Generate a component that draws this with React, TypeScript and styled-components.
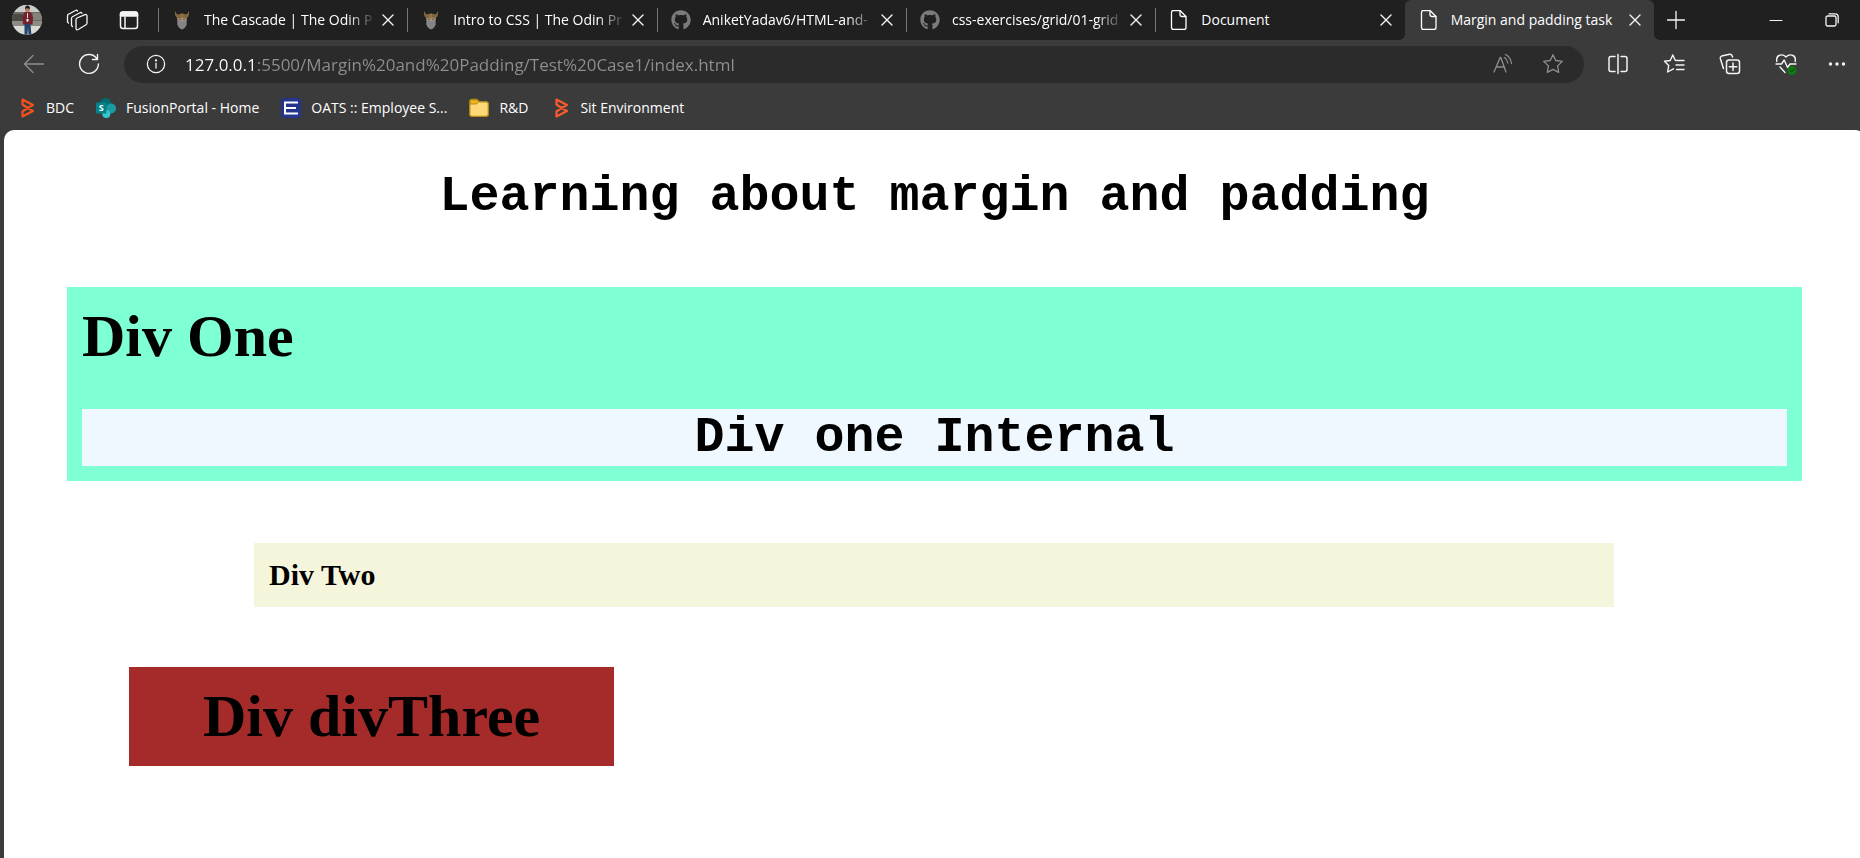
import React from "react";
import styled, { createGlobalStyle, css } from "styled-components";
import { FaGithub } from "react-icons/fa";

const GlobalStyle = createGlobalStyle`
  * { box-sizing: border-box; }
  body { margin: 0; background: #3b3b3b; }
`;

const Shell = styled.div`
  display: flex;
  flex-direction: column;
  min-height: 100vh;
  overflow: hidden;
  background: #3b3b3b;
  color: #fff;
  font-family: "Open Sans", "Noto Sans", sans-serif;
  font-size: 14px;
`;

/* ---------- tab strip ---------- */

const TabStrip = styled.header`
  display: flex;
  height: 40px;
  background: #202020;
`;

const StripTools = styled.div`
  display: flex;
  align-items: center;
  gap: 20px;
  width: 158px;
  padding-left: 11px;
`;

const TabList = styled.nav`
  display: flex;
  flex: 1;
  min-width: 0;
`;

const corner = css`
  content: "";
  position: absolute;
  bottom: 0;
  width: 6px;
  height: 6px;
`;

const TabItem = styled.div<{ $active?: boolean }>`
  position: relative;
  display: flex;
  align-items: center;
  flex: 1 1 0;
  min-width: 0;
  height: 40px;
  padding-right: 7px;
  ${(p) =>
    p.$active &&
    css`
      background: #3b3b3b;
      border-radius: 6px 6px 0 0;
      &::before {
        ${corner}
        left: -6px;
        background: radial-gradient(circle at 0 0, transparent 6px, #3b3b3b 6px);
      }
      &::after {
        ${corner}
        right: -6px;
        background: radial-gradient(circle at 100% 0, transparent 6px, #3b3b3b 6px);
      }
    `}
`;

const Divider = styled.span<{ $hidden?: boolean }>`
  width: 1px;
  height: 24px;
  margin-right: 13px;
  background: ${(p) => (p.$hidden ? "transparent" : "#757575")};
`;

const TabLink = styled.a<{ $faded?: boolean }>`
  display: flex;
  align-items: center;
  gap: 12px;
  flex: 1;
  min-width: 0;
  overflow: hidden;
  color: #fff;
  line-height: 20px;
  text-decoration: none;
  white-space: nowrap;
  ${(p) => p.$faded && "mask-image: linear-gradient(to left, transparent, #000 28px);"}
  svg { flex: none; }
`;

const IconButton = styled.button<{ $w?: number; $dim?: boolean }>`
  display: flex;
  align-items: center;
  justify-content: center;
  flex: none;
  width: ${(p) => p.$w ?? 20}px;
  height: 32px;
  padding: 0;
  border: 0;
  background: none;
  color: ${(p) => (p.$dim ? "#8f8f8f" : "#f4f4f4")};
`;

const WindowControls = styled.div`
  display: flex;
  align-items: center;
  width: 206px;
  padding-left: 6px;
`;

const Spacer = styled.span`
  flex: 1;
`;

/* ---------- toolbar ---------- */

const Toolbar = styled.div`
  display: flex;
  align-items: center;
  height: 48px;
  padding-left: 6px;
`;

const AddressBar = styled.form`
  display: flex;
  align-items: center;
  flex: 1;
  min-width: 0;
  height: 37px;
  margin: 0 6px 0 7px;
  padding: 0 11px 0 22px;
  border-radius: 19px;
  background: #2b2b2b;
`;

const AddressInput = styled.input`
  flex: 1;
  min-width: 0;
  height: 28px;
  margin-left: 19px;
  padding: 0;
  border: 0;
  outline: 0;
  font-family: "Open Sans", "Noto Sans", sans-serif;
  font-size: 17px;
  color: transparent;
  background: linear-gradient(to right, #fff 72px, #8f8f8f 72px);
  background-clip: text;
  -webkit-background-clip: text;
`;

/* ---------- bookmarks ---------- */

const Bookmarks = styled.nav`
  display: flex;
  align-items: center;
  gap: 22px;
  height: 42px;
  padding: 0 0 2px 16px;
`;

const Bookmark = styled.a`
  display: flex;
  align-items: center;
  gap: 10px;
  color: #fff;
  line-height: 20px;
  text-decoration: none;
  white-space: nowrap;
`;

/* ---------- document ---------- */

const Page = styled.main`
  flex: 1;
  margin: 0 -5px 0 4px;
  padding: 38px 63px 92px;
  border-radius: 10px 10px 0 0;
  background: #fff;
  color: #000;
  font-family: "Liberation Serif", "Times New Roman", serif;
  font-weight: 700;
`;

const MonoHeading = styled.h1`
  margin: 0;
  font-family: "Courier New", "Liberation Mono", monospace;
  font-size: 50px;
  line-height: 57px;
  text-align: center;
`;

const DivOne = styled.section`
  margin-top: 62px;
  padding: 15px;
  background: aquamarine;
`;

const BigText = styled.div`
  font-size: 60px;
  line-height: 69px;
`;

const Internal = styled(MonoHeading).attrs({ as: "h2" })`
  margin-top: 38px;
  background: #f0f8ff;
`;

const DivTwo = styled.section`
  margin: 62px 188px 0 187px;
  padding: 15px;
  background: beige;
  font-size: 30px;
  line-height: 34px;
`;

const DivThree = styled.section`
  width: fit-content;
  margin: 60px 0 0 62px;
  padding: 15px 74px;
  background: brown;
`;

/* ---------- icons ---------- */

const Svg = ({ size = 20, children, sw = 1.3 }: { size?: number; sw?: number; children: React.ReactNode }) => (
  <svg width={size} height={size} viewBox={`0 0 ${size} ${size}`} fill="none" stroke="currentColor"
    strokeWidth={sw} strokeLinecap="round" strokeLinejoin="round" aria-hidden="true">
    {children}
  </svg>
);

const Avatar = () => (
  <svg width="32" height="32" viewBox="0 0 32 32" aria-hidden="true">
    <clipPath id="face"><circle cx="16" cy="16" r="15" /></clipPath>
    <g clipPath="url(#face)">
      <rect width="32" height="32" fill="#d9dad6" />
      <rect width="32" height="8" fill="#c9cdca" />
      <path d="M0 8h32v9H0z" fill="#6d6a64" />
      <path d="M0 10h12v7H0z" fill="#4b4a47" />
      <path d="M22 9h10v7H22z" fill="#85827c" />
      <path d="M0 17h32v5H0z" fill="#8f8b82" />
      <path d="M13 8.500q4-1.500 7 0l2 5-.5 7h-9.500l-.5-7z" fill="#74202f" />
      <path d="M13.500 20h6l1 12h-3L17 24l-.7 8h-2.800z" fill="#24446e" />
      <circle cx="16.500" cy="5.500" r="2.500" fill="#b47e63" />
      <path d="M14 5q0-3.500 2.500-3.500T19 5q-2.500-1.500-5 0z" fill="#20191a" />
      <path d="M16 9h1v5h-1z" fill="#ead8dc" />
      <path d="M15.500 15h2v2.500h-2z" fill="#fff" />
    </g>
  </svg>
);

const Workspaces = () => (
  <Svg size={22}>
    <path d="M2.500 14 1.500 13V7q0-1.300 1-1.800l7-3.700q1.500-.6 2 .5" />
    <path d="M6.500 17.500 5.500 16.500V9.500q0-1.200 1-1.800l7.500-4q1.600-.6 2 .6" />
    <path d="m11 9 8-3.300q2-.7 2 1.300v7q0 1.200-1 1.800l-7.700 4.700q-2.300 1-2.300-1.300v-8.400q0-1.300 1-1.800z" />
  </Svg>
);

const TabActions = () => (
  <Svg sw={1.5}>
    <rect x="1.500" y="2" width="17" height="16.500" rx="2.500" />
    <path d="M1.500 4.500q0-2.500 2.500-2.500h12q2.500 0 2.500 2.500V6h-17z" fill="currentColor" />
    <path d="M6 7v11" />
  </Svg>
);

const Viking = () => (
  <svg width="20" height="20" viewBox="0 0 20 20" aria-hidden="true">
    <path d="M3.300.8q.2 3 2.500 3.700L10 3.300l4.200 1.200q2.300-.7 2.500-3.700 1.300 4.500-1.700 7.200v2H5V8Q2 5.300 3.300.8z" fill="#82683f" />
    <path d="M5.300 8.500h9.400v5.700q-1 4-4.700 5.300-3.700-1.300-4.700-5.300z" fill="#858585" />
    <path d="M6.500 8.300h7v2.200q-3.500 1.500-7 0z" fill="#a98f77" />
    <path d="M7.500 9.500h1M11.500 9.500h1" stroke="#333" />
    <path d="M10 4v4.500" stroke="#a18152" />
  </svg>
);

const FileIcon = () => (
  <Svg sw={1.3}>
    <path d="M2.500 2.500q0-2 2-2H11L17 6.500v11q0 2-2 2H4.500q-2 0-2-2z" />
    <path d="M11 .8V4.500q0 2 2 2h3.800" />
  </Svg>
);

const Cross = () => <Svg size={12} sw={1.4}><path d="m1 1 10 10M11 1 1 11" /></Svg>;
const Plus = () => <Svg size={20}><path d="M10 1.500v17M1.500 10h17" /></Svg>;
const Minimise = () => <Svg size={14} sw={1}><path d="M1 7.500h12" /></Svg>;
const Restore = () => (
  <Svg size={14}>
    <rect x="1" y="3" width="10" height="10" rx="1.500" />
    <path d="M4 .8h6.200q3 0 3 3v6" />
  </Svg>
);
const Back = () => <Svg size={22}><path d="M20.500 11H1.500M10 2.500 1.500 11 10 19.500" /></Svg>;
const Reload = () => (
  <Svg size={22} sw={1.4}>
    <path d="M18.700 5.500A9.400 9.400 0 1 0 20.400 11M19.500 1.500V6.500h-5" />
  </Svg>
);
const Info = () => (
  <Svg size={22} sw={1.4}>
    <circle cx="11" cy="11" r="9.500" />
    <path d="M11 10v5.500" />
    <circle cx="11" cy="7" r=".6" fill="currentColor" />
  </Svg>
);
const ReadAloud = () => (
  <Svg size={22}>
    <path d="M2 19 8.200 4.500h.6L14 19M4.200 14h8.200M12.500 4.500q2.800 1.700 3.300 5.500M13.500 1.500q5 2.500 6 9" />
  </Svg>
);
const Star = () => (
  <Svg size={22}>
    <path d="m11 1.800 2.800 5.700 6.500.9-4.700 4.500 1.100 6.400-5.700-3-5.700 3 1.100-6.400-4.700-4.500 6.500-.9z" />
  </Svg>
);
const Split = () => (
  <Svg size={22} sw={1.5}>
    <path d="M8 3.500H4q-2 0-2 2v11q0 2 2 2h4M14 3.500h4q2 0 2 2v11q0 2-2 2h-4M11 1.500v19" />
  </Svg>
);
const Favorites = () => (
  <Svg size={22} sw={1.4}>
    <path d="m14 7.500-1.800-.2L9.800 2 7.200 7.500l-5.700.8 4.200 4.300L4.600 19 10.500 15.800M14.500 7.500H21M13 12h8M13.500 16.500H21" />
  </Svg>
);
const Collections = () => (
  <Svg size={22} sw={1.5}>
    <rect x="7.500" y="7" width="13" height="13.500" rx="2.500" />
    <path d="M14 10v7.500M10.300 13.700h7.500M4.500 15.500 1.300 5.500q-.4-1.800 1.300-2.400l8-1.900q1.800-.3 2.400 1.300l.6 1.500" />
  </Svg>
);
const Essentials = () => (
  <Svg size={22} sw={1.4}>
    <path d="M1.800 8.500Q1 4 4 2.500 8 .8 11 4q3-3.200 7-1.500Q21 4 20.200 8.500M1 11h5.500l2.700-4 3.300 7.500 2.500-3.500H21M5 14l5 5.500" />
    <circle cx="17" cy="17.500" r="4.500" fill="#0f7b0f" stroke="none" />
    <path d="m15 17.500 1.500 1.500 2.700-3" stroke="#0a3f0a" strokeWidth="1" />
  </Svg>
);
const Dots = () => (
  <Svg size={20}>
    <g fill="currentColor" stroke="none">
      <circle cx="3.500" cy="10" r="1.700" /><circle cx="10" cy="10" r="1.700" /><circle cx="16.500" cy="10" r="1.700" />
    </g>
  </Svg>
);

const Chevrons = ({ color }: { color: string }) => (
  <svg width="20" height="20" viewBox="0 0 20 20" fill="none" stroke={color} strokeWidth="2.200" strokeLinejoin="round" aria-hidden="true">
    <path d="M6.500 1.500 17 7l-5.500 3-5-3.500zM6.500 18.500 17 13l-5.500-3-5 3.500z" />
  </svg>
);
const SharePoint = () => (
  <svg width="20" height="20" viewBox="0 0 20 20" aria-hidden="true">
    <circle cx="9.500" cy="5.500" r="5.500" fill="#036c70" />
    <circle cx="15" cy="10.500" r="5" fill="#1a9ba1" />
    <circle cx="10.300" cy="16" r="4" fill="#37c6d0" />
    <rect y="4.500" width="10.500" height="11" rx="1" fill="#038387" />
    <text x="5.200" y="13.300" textAnchor="middle" fill="#fff" fontFamily="Open Sans" fontSize="9" fontWeight="700">S</text>
  </svg>
);
const EmployeeMark = () => (
  <svg width="20" height="20" viewBox="0 0 20 20" aria-hidden="true">
    <rect width="20" height="20" rx="2.500" fill="#24368b" />
    <path d="M17 4.500H4V15.500h13M4 10h11" fill="none" stroke="#fff" strokeWidth="2" />
  </svg>
);
const Folder = () => (
  <svg width="20" height="20" viewBox="0 0 20 20" aria-hidden="true">
    <path d="M.8 3.500q0-2 2-2h5l2.500 2.300h7q2 0 2 2v10.500q0 2-2 2H2.800q-2 0-2-2z" fill="#ffd977" stroke="#b98a14" strokeWidth="1.300" />
    <path d="M1.200 6V3.500q0-1.600 1.600-1.600h4.800l1.900 1.900L7.500 6z" fill="#eeb61f" stroke="#b98a14" />
  </svg>
);

const tabs = [
  { title: "The Cascade | The Odin P", icon: <Viking />, faded: true },
  { title: "Intro to CSS | The Odin Pr", icon: <Viking />, faded: true },
  { title: "AniketYadav6/HTML-and-", icon: <FaGithub size={20} color="#7b7b7b" />, faded: true },
  { title: "css-exercises/grid/01-grid", icon: <FaGithub size={20} color="#7b7b7b" />, faded: true },
  { title: "Document", icon: <FileIcon /> },
  { title: "Margin and padding task", icon: <FileIcon />, active: true },
];

const bookmarks = [
  { label: "BDC", icon: <Chevrons color="#f4511e" /> },
  { label: "FusionPortal - Home", icon: <SharePoint /> },
  { label: "OATS :: Employee S...", icon: <EmployeeMark /> },
  { label: "R&D", icon: <Folder /> },
  { label: "Sit Environment", icon: <Chevrons color="#fa5a2d" /> },
];

export default function App() {
  return (
    <Shell>
      <GlobalStyle />
      <TabStrip>
        <StripTools>
          <IconButton $w={32} aria-label="Profile"><Avatar /></IconButton>
          <IconButton $w={28} aria-label="Workspaces"><Workspaces /></IconButton>
          <IconButton $w={36} aria-label="Tab actions menu"><TabActions /></IconButton>
        </StripTools>
        <TabList aria-label="Tabs">
          {tabs.map((t) => (
            <TabItem key={t.title} $active={t.active}>
              <Divider $hidden={t.active} />
              <TabLink href="#" $faded={t.faded}>
                {t.icon}
                {t.title}
              </TabLink>
              <IconButton $w={24} aria-label="Close tab"><Cross /></IconButton>
            </TabItem>
          ))}
        </TabList>
        <WindowControls>
          <IconButton $w={32} aria-label="New tab"><Plus /></IconButton>
          <Spacer />
          <IconButton $w={56} aria-label="Minimise"><Minimise /></IconButton>
          <IconButton $w={56} aria-label="Restore"><Restore /></IconButton>
        </WindowControls>
      </TabStrip>

      <Toolbar>
        <IconButton $w={55} $dim aria-label="Back"><Back /></IconButton>
        <IconButton $w={56} aria-label="Refresh"><Reload /></IconButton>
        <AddressBar>
          <IconButton type="button" aria-label="View site information"><Info /></IconButton>
          <AddressInput
            aria-label="Address"
            defaultValue="127.0.0.1:5500/Margin%20and%20Padding/Test%20Case1/index.html"
          />
          <IconButton $w={60} type="button" $dim aria-label="Read aloud"><ReadAloud /></IconButton>
          <IconButton $w={40} type="button" $dim aria-label="Add to favorites"><Star /></IconButton>
        </AddressBar>
        <IconButton $w={56} aria-label="Split screen"><Split /></IconButton>
        <IconButton $w={56} aria-label="Favorites"><Favorites /></IconButton>
        <IconButton $w={56} aria-label="Collections"><Collections /></IconButton>
        <IconButton $w={56} aria-label="Browser essentials"><Essentials /></IconButton>
        <IconButton $w={46} aria-label="Settings and more"><Dots /></IconButton>
      </Toolbar>

      <Bookmarks aria-label="Favorites bar">
        {bookmarks.map((b) => (
          <Bookmark key={b.label} href="#">
            {b.icon}
            {b.label}
          </Bookmark>
        ))}
      </Bookmarks>

      <Page>
        <MonoHeading>Learning about margin and padding</MonoHeading>
        <DivOne>
          <BigText>Div One</BigText>
          <Internal>Div one Internal</Internal>
        </DivOne>
        <DivTwo>Div Two</DivTwo>
        <DivThree>
          <BigText>Div divThree</BigText>
        </DivThree>
      </Page>
    </Shell>
  );
}
